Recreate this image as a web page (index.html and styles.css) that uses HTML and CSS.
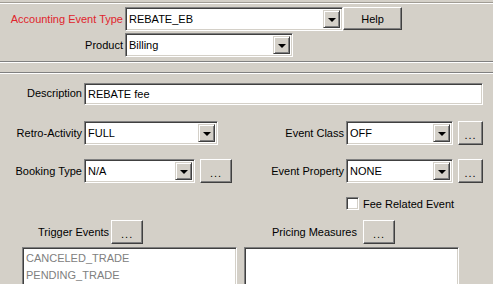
FILE: index.html
```html
<!DOCTYPE html>
<html lang="en">
<head>
  <meta charset="UTF-8">
  <title>Accounting Event</title>
  <link rel="stylesheet" href="styles.css">
</head>
<body>
  <div class="frame">
    <!-- header: event type and product -->
    <div class="head">
      <div class="row row-type">
        <label class="lbl lbl-type required">Accounting Event Type</label>
        <div class="combo combo-type">
          <span class="value">REBATE_EB</span>
          <span class="drop"><i class="arrow"></i></span>
        </div>
        <button class="btn btn-help">Help</button>
      </div>
      <div class="row row-product">
        <label class="lbl lbl-type">Product</label>
        <div class="combo combo-product">
          <span class="value">Billing</span>
          <span class="drop"><i class="arrow"></i></span>
        </div>
      </div>
    </div>

    <div class="sep sep-top"></div>
    <div class="sep sep-bottom"></div>

    <!-- event details -->
    <div class="details">
      <div class="row row-desc">
        <label class="lbl lbl-left">Description</label>
        <div class="field field-desc"><span class="value">REBATE fee</span></div>
      </div>

      <div class="row row-pair row-retro">
        <div class="half">
          <label class="lbl lbl-left">Retro-Activity</label>
          <div class="combo combo-retro">
            <span class="value">FULL</span>
            <span class="drop"><i class="arrow"></i></span>
          </div>
        </div>
        <div class="half half-right">
          <label class="lbl lbl-right">Event Class</label>
          <div class="combo combo-right">
            <span class="value">OFF</span>
            <span class="drop"><i class="arrow"></i></span>
          </div>
          <button class="btn btn-dots">...</button>
        </div>
      </div>

      <div class="row row-pair row-booking">
        <div class="half">
          <label class="lbl lbl-left">Booking Type</label>
          <div class="combo combo-booking">
            <span class="value">N/A</span>
            <span class="drop"><i class="arrow"></i></span>
          </div>
          <button class="btn btn-dots btn-wide">...</button>
        </div>
        <div class="half half-right">
          <label class="lbl lbl-right">Event Property</label>
          <div class="combo combo-right">
            <span class="value">NONE</span>
            <span class="drop"><i class="arrow"></i></span>
          </div>
          <button class="btn btn-dots">...</button>
        </div>
      </div>

      <div class="row row-check">
        <span class="checkbox"></span>
        <span class="check-label">Fee Related Event</span>
      </div>

      <div class="row row-lists-head">
        <div class="list-head list-head-left">
          <span class="list-title">Trigger Events</span>
          <button class="btn btn-dots btn-wide">...</button>
        </div>
        <div class="list-head list-head-right">
          <span class="list-title">Pricing Measures</span>
          <button class="btn btn-dots btn-wide">...</button>
        </div>
      </div>

      <div class="row row-lists">
        <ul class="listbox listbox-left">
          <li>CANCELED_TRADE</li>
          <li>PENDING_TRADE</li>
        </ul>
        <ul class="listbox listbox-right"></ul>
      </div>
    </div>
  </div>
</body>
</html>
```

FILE: styles.css
```css
html, body {
  margin: 0;
  padding: 0;
  background: #d4d0c8;
  overflow: hidden;
}
body {
  font-family: "Liberation Sans", Arial, sans-serif;
  font-size: 11px;
  color: #000;
  height: 284px;
}
.frame {
  box-sizing: border-box;
  width: 493px;
  height: 282px;
  overflow: hidden;
  border-top: 1px solid #a09c94;
  margin-top: 2px;
  box-shadow: inset 0 1px #fff;
}

.row {
  display: flex;
  align-items: center;
}
.lbl {
  text-align: right;
  white-space: nowrap;
  padding-right: 2px;
}
.required {
  color: #e0242c;
}

/* header */
.head {
  padding-top: 4px;
}
.row-type {
  height: 24px;
}
.row-product {
  height: 24px;
  margin-top: 2px;
}
.lbl-type {
  width: 123px;
}
.combo-type {
  width: 218px;
}
.combo-product {
  width: 168px;
}
.btn-help {
  width: 59px;
  height: 23px;
  margin-left: 7px;
  align-self: flex-start;
}

.sep {
  height: 1px;
  background: #808080;
  border-bottom: 1px solid #fff;
}
.sep-top {
  margin-top: 4px;
}
.sep-bottom {
  margin-top: 9px;
}

/* sunken fields */
.combo, .field, .listbox, .checkbox {
  box-sizing: border-box;
  background: #fff;
  border: 1px solid;
  border-color: #808080 #fff #fff #808080;
  box-shadow: inset 1px 1px #404040, inset -1px -1px #d4d0c8;
}
.combo, .field {
  height: 100%;
  display: flex;
  align-items: center;
  padding: 2px;
}
.value {
  flex: 1;
  padding-left: 1px;
  white-space: nowrap;
}
.drop {
  box-sizing: border-box;
  width: 17px;
  height: 100%;
  background: #d4d0c8;
  border: 1px solid;
  border-color: #d4d0c8 #404040 #404040 #d4d0c8;
  box-shadow: inset 1px 1px #fff, inset -1px -1px #808080;
  display: flex;
  align-items: center;
  justify-content: center;
}
.arrow {
  width: 0;
  height: 0;
  border-left: 4px solid transparent;
  border-right: 4px solid transparent;
  border-top: 4px solid #000;
  margin-top: 1px;
}

/* raised buttons */
.btn {
  box-sizing: border-box;
  font-family: inherit;
  font-size: 11px;
  color: #000;
  background: #d4d0c8;
  border: 1px solid;
  border-color: #fff #404040 #404040 #fff;
  box-shadow: inset -1px -1px #808080;
  padding: 0;
  margin: 0;
}
.btn-dots {
  width: 25px;
  height: 24px;
  margin-left: 5px;
  padding-top: 3px;
  letter-spacing: 1px;
}
.btn-wide {
  width: 32px;
}

/* details */
.details {
  padding-top: 9px;
}
.row-desc {
  height: 22px;
}
.lbl-left {
  width: 82px;
}
.row-desc .lbl {
  margin-top: -2px;
}
.field-desc {
  width: 399px;
}
.row-pair {
  height: 24px;
}
.row-retro {
  margin-top: 16px;
}
.row-booking {
  margin-top: 14px;
}
.half {
  width: 240px;
  height: 100%;
  display: flex;
  align-items: center;
}
.half-right {
  width: 250px;
}
.lbl-right {
  width: 104px;
}
.combo-retro {
  width: 134px;
}
.combo-booking {
  width: 111px;
}
.combo-right {
  width: 107px;
}

.row-check {
  margin-top: 14px;
  height: 13px;
  padding-left: 346px;
}
.checkbox {
  width: 13px;
  height: 13px;
}
.check-label {
  margin-left: 4px;
}

.row-lists-head {
  margin-top: 10px;
  height: 24px;
}
.list-head {
  display: flex;
  align-items: center;
  height: 100%;
}
.list-head .btn {
  height: 100%;
}
.list-head-left {
  padding-left: 38px;
  width: 234px;
}
.list-head-left .btn {
  margin-left: 2px;
}
.list-head-right .btn {
  margin-left: 6px;
}

.row-lists {
  margin-top: 3px;
  align-items: flex-start;
}
.listbox {
  list-style: none;
  margin: 0;
  height: 60px;
  width: 215px;
  padding: 2px 3px;
  color: #808080;
}
.listbox li {
  height: 17px;
  line-height: 17px;
}
.listbox-left {
  margin-left: 22px;
}
.listbox-right {
  margin-left: 7px;
}
```
